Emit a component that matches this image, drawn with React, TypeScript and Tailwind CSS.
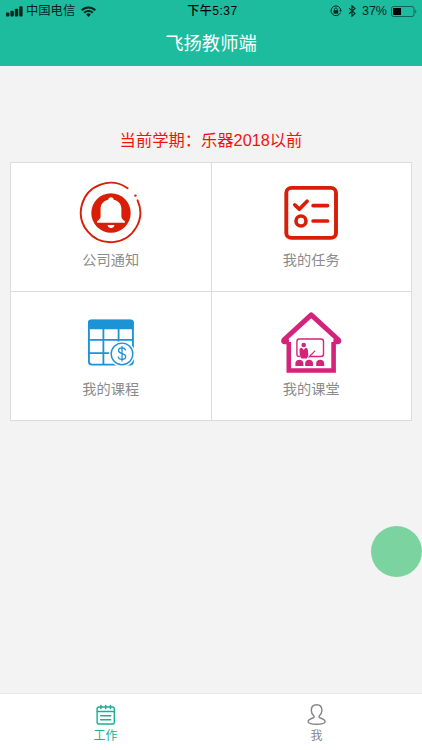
import type { ReactNode } from "react";

function BellIcon() {
  return (
    <svg className="block h-16 w-16" viewBox="79 181 64 64" fill="none">
      <path d="M127.6 188.2A29.7 29.7 0 1 0 137.6 200.3" stroke="#d81e06" strokeWidth="1.9" strokeLinecap="round" />
      <circle cx="135.4" cy="195.6" r="1.2" fill="#d81e06" />
      <circle cx="111" cy="213" r="19.7" fill="#d81e06" />
      <path d="M111 197.3c1.5 0 2.6 1 2.8 2.4 4.800 1.200 7.600 4.600 7.600 9.300v7.500c0 2.200 1.600 3.200 3.500 4.700v1.500H97.100v-1.500c1.900-1.500 3.500-2.500 3.500-4.700V209c0-4.700 2.800-8.100 7.600-9.300.2-1.400 1.300-2.400 2.800-2.400z" fill="#fff" />
      <path d="M107.500 225h7c-.4 2-1.700 3-3.500 3s-3.100-1-3.500-3z" fill="#fff" />
    </svg>
  );
}

function TaskIcon() {
  return (
    <svg className="block h-16 w-16" viewBox="279.500 181 64 64" fill="none" stroke="#d81e06" strokeWidth="3.9" strokeLinecap="round" strokeLinejoin="round">
      <rect x="286.800" y="187.900" width="49.700" height="50" rx="5" />
      <path d="M295.300 204.900l4.500 4.300 7.800-7.900M313.600 205.600h14.400M313.600 221h14.400" strokeWidth="3.700" />
      <circle cx="301.500" cy="221" r="5" strokeWidth="3.600" />
    </svg>
  );
}

function CalendarIcon() {
  return (
    <svg className="block h-16 w-16" viewBox="79 309.500 64 64" fill="none">
      <rect x="88.900" y="320.100" width="44" height="44" rx="3" stroke="#1b93d5" strokeWidth="1.900" />
      <path d="M88 328.800V322a3 3 0 0 1 3-3h39.700a3 3 0 0 1 3 3v6.800z" fill="#1b93d5" />
      <path d="M88 339.400h45.700M88 352.600h34M103.400 328v36M118.600 328v24" stroke="#1b93d5" strokeWidth="1.800" />
      <circle cx="122" cy="353.400" r="13" fill="#fff" />
      <circle cx="122" cy="353.400" r="10.800" stroke="#1b93d5" strokeWidth="1.400" />
      <path d="M125.500 349.900c-.2-1.700-1.500-2.600-3.500-2.600s-3.500 1-3.500 2.800c0 4 7.200 2.100 7.200 6 0 1.800-1.500 2.900-3.700 2.900s-3.600-1.100-3.800-3M122 345.500v15.600" stroke="#1b93d5" strokeWidth="1.300" />
    </svg>
  );
}

function ClassroomIcon() {
  return (
    <svg className="block h-16 w-16" viewBox="279.500 310 64 64" fill="none" stroke="#d4237a">
      <path d="M289.300 342v28.500h44.800V342" strokeWidth="4.600" />
      <path d="M289.500 341.700h-4.300c-1.400 0-1.400-1.200-.4-2.200l26.900-24.600L338.600 339.500c1 1 1 2.200-.4 2.200h-4.300" strokeWidth="5" strokeLinejoin="round" />
      <path d="M300.300 356.500h-.6a2.300 2.300 0 0 1-2.300-2.300v-12.700a2.500 2.500 0 0 1 2.500-2.500h21.600a2.500 2.500 0 0 1 2.500 2.500v12.500a2.500 2.500 0 0 1-2.500 2.500h-11" strokeWidth="1.400" />
      <path d="M309 357.500l6.700-6.900" strokeWidth="1.100" />
      <g fill="#d4237a" stroke="none">
        <circle cx="304.200" cy="345" r="2.300" />
        <path d="M300 350.200c0-1.700 1-2.500 2.500-2.500l1.700 2.300 1.700-2.300c1.500 0 2.300.8 2.500 2.500l.4 5.600-1.500 2.700h-5.500l-1.500-2.700z" />
        <path d="M295.900 365.900v-2.600c0-2.300 1.700-3.500 4-3.500s4 1.200 4 3.500v2.600zM305.700 365.900v-2.600c0-2.300 1.600-3.500 3.900-3.500s3.900 1.200 3.900 3.500v2.600zM316.700 365.900v-2.600c0-2.300 1.700-3.500 4-3.500s4 1.200 4 3.500v2.600z" />
      </g>
    </svg>
  );
}

function Tile({ label, children }: { label: string; children: ReactNode }) {
  return (
    <div className="flex flex-col items-center border-r border-b border-[#dcdce0] bg-white pt-[18px]">
      {children}
      <span className="mt-[5px] text-[14.200px] leading-5 text-[#8b8b8b]">{label}</span>
    </div>
  );
}

function StatusBar() {
  return (
    <div className="grid h-[22px] grid-cols-3 items-center text-[12px] leading-[22px] text-[#06251f]">
      <div className="flex items-center pl-1.5">
        <svg className="h-[11px] w-[17px]" viewBox="0 0 17 11" fill="currentColor">
          <rect x="0" y="6.500" width="3.400" height="4" rx="1" />
          <rect x="4.400" y="4.700" width="3.400" height="5.800" rx="1" />
          <rect x="8.800" y="2.700" width="3.400" height="7.800" rx="1" />
          <rect x="13.200" y="0.300" width="3.400" height="10.200" rx="1" />
        </svg>
        <span className="ml-[3px] text-[12.300px]">中国电信</span>
        <svg className="ml-1.5 h-[11px] w-[15px]" viewBox="0 0 15 11" fill="none" stroke="currentColor" strokeWidth="2">
          <path d="M.7 4.200a9.600 9.600 0 0 1 13.600 0M3.200 6.700a6.100 6.100 0 0 1 8.600 0" />
          <path d="M5.200 8.400a3.300 3.300 0 0 1 4.600 0L7.500 10.900z" fill="currentColor" stroke="none" />
        </svg>
      </div>
      <div className="pl-[3px] text-center font-medium tracking-[0.500px] text-black">下午5:37</div>
      <div className="flex items-center justify-end pr-[5px]">
        <svg className="h-3 w-3" viewBox="0 0 12 12" fill="none" stroke="currentColor">
          <path d="M10.400 7.800a4.900 4.900 0 1 1 .4-2.600" strokeWidth="1" />
          <path d="M9.200 5.200h2.800L10.600 7z" fill="currentColor" stroke="none" />
          <rect x="3.600" y="5.200" width="4.600" height="3.400" fill="currentColor" stroke="none" />
          <path d="M4.500 5.500V4.300a1.400 1.400 0 0 1 2.800 0v1.200" strokeWidth=".8" />
        </svg>
        <svg className="ml-[6px] h-3 w-2" viewBox="0 0 8 12" fill="none" stroke="currentColor" strokeWidth="1.100">
          <path d="M1 3.200l6 5.400-3 2.600V.8l3 2.600-6 5.400" />
        </svg>
        <span className="ml-[6px] text-[12.500px]">37%</span>
        <svg className="ml-1 h-[11px] w-[26px]" viewBox="0 0 26 11" fill="none">
          <rect x=".5" y=".5" width="22.500" height="10" rx="2" stroke="#09695a" />
          <rect x="2" y="2" width="8" height="7" fill="#000" />
          <path d="M24.300 3.600v3.800c1.400-.5 1.400-3.300 0-3.800z" fill="#09695a" />
        </svg>
      </div>
    </div>
  );
}

export default function App() {
  return (
    <div className="flex h-[750px] w-[422px] flex-col bg-[#f3f3f3] font-['Liberation_Sans','Noto_Sans_CJK_SC',sans-serif]">
      <header className="h-[66px] bg-[#1dbc9e]">
        <StatusBar />
        <h1 className="text-center text-[18.300px] leading-[43px] text-white">飞扬教师端</h1>
      </header>
      <main className="relative grow px-[10px] pt-[62px]">
        <p className="h-[34px] text-center text-[16.300px] leading-6 text-[#f0140f]">当前学期：乐器2018以前</p>
        <div className="grid h-[259px] grid-cols-2 grid-rows-[129px_129px] border-t border-l border-[#dcdce0]">
          <Tile label="公司通知"><BellIcon /></Tile>
          <Tile label="我的任务"><TaskIcon /></Tile>
          <Tile label="我的课程"><CalendarIcon /></Tile>
          <Tile label="我的课堂"><ClassroomIcon /></Tile>
        </div>
        <div className="absolute top-[460px] right-0 h-[51px] w-[51px] rounded-full bg-[#7bd4a0]" />
      </main>
      <nav className="grid h-[57px] grid-cols-2 border-t border-[#e8e8e8] bg-white text-[12px] leading-4">
        <div className="flex flex-col items-center pt-[9px] text-[#1dae93]">
          <svg className="h-6 w-6" viewBox="0.300 0 24 24" fill="none" stroke="currentColor" strokeWidth="1.400" strokeLinecap="round">
            <rect x="3.400" y="4" width="17.200" height="17" rx="1.800" />
            <path d="M3.500 8.500h17M7 12.700h10M7 16.800h10" />
            <path d="M7.200 2.500v3M12 2.500v3M16.800 2.500v3" strokeWidth="1.600" />
          </svg>
          <span className="mt-px">工作</span>
        </div>
        <div className="flex flex-col items-center pt-[9px] text-[#858585]">
          <svg className="h-6 w-6" viewBox="0.400 0 24 24" fill="none" stroke="currentColor" strokeWidth="1.400" strokeLinejoin="round">
            <path d="M12 1.700c-3.200 0-5.300 2.300-5.300 5.600 0 2.600 1.100 4.300 2.500 5.500.7.800.4 1.700-.6 2.100-3 1-5.100 1.600-5.100 3.600 0 2.200 4 2.700 8.500 2.700s8.500-.5 8.500-2.700c0-2-2.100-2.600-5.100-3.600-1-.4-1.300-1.300-.6-2.100 1.400-1.200 2.500-2.900 2.500-5.500 0-3.300-2.100-5.600-5.300-5.600z" />
          </svg>
          <span className="mt-px">我</span>
        </div>
      </nav>
    </div>
  );
}
